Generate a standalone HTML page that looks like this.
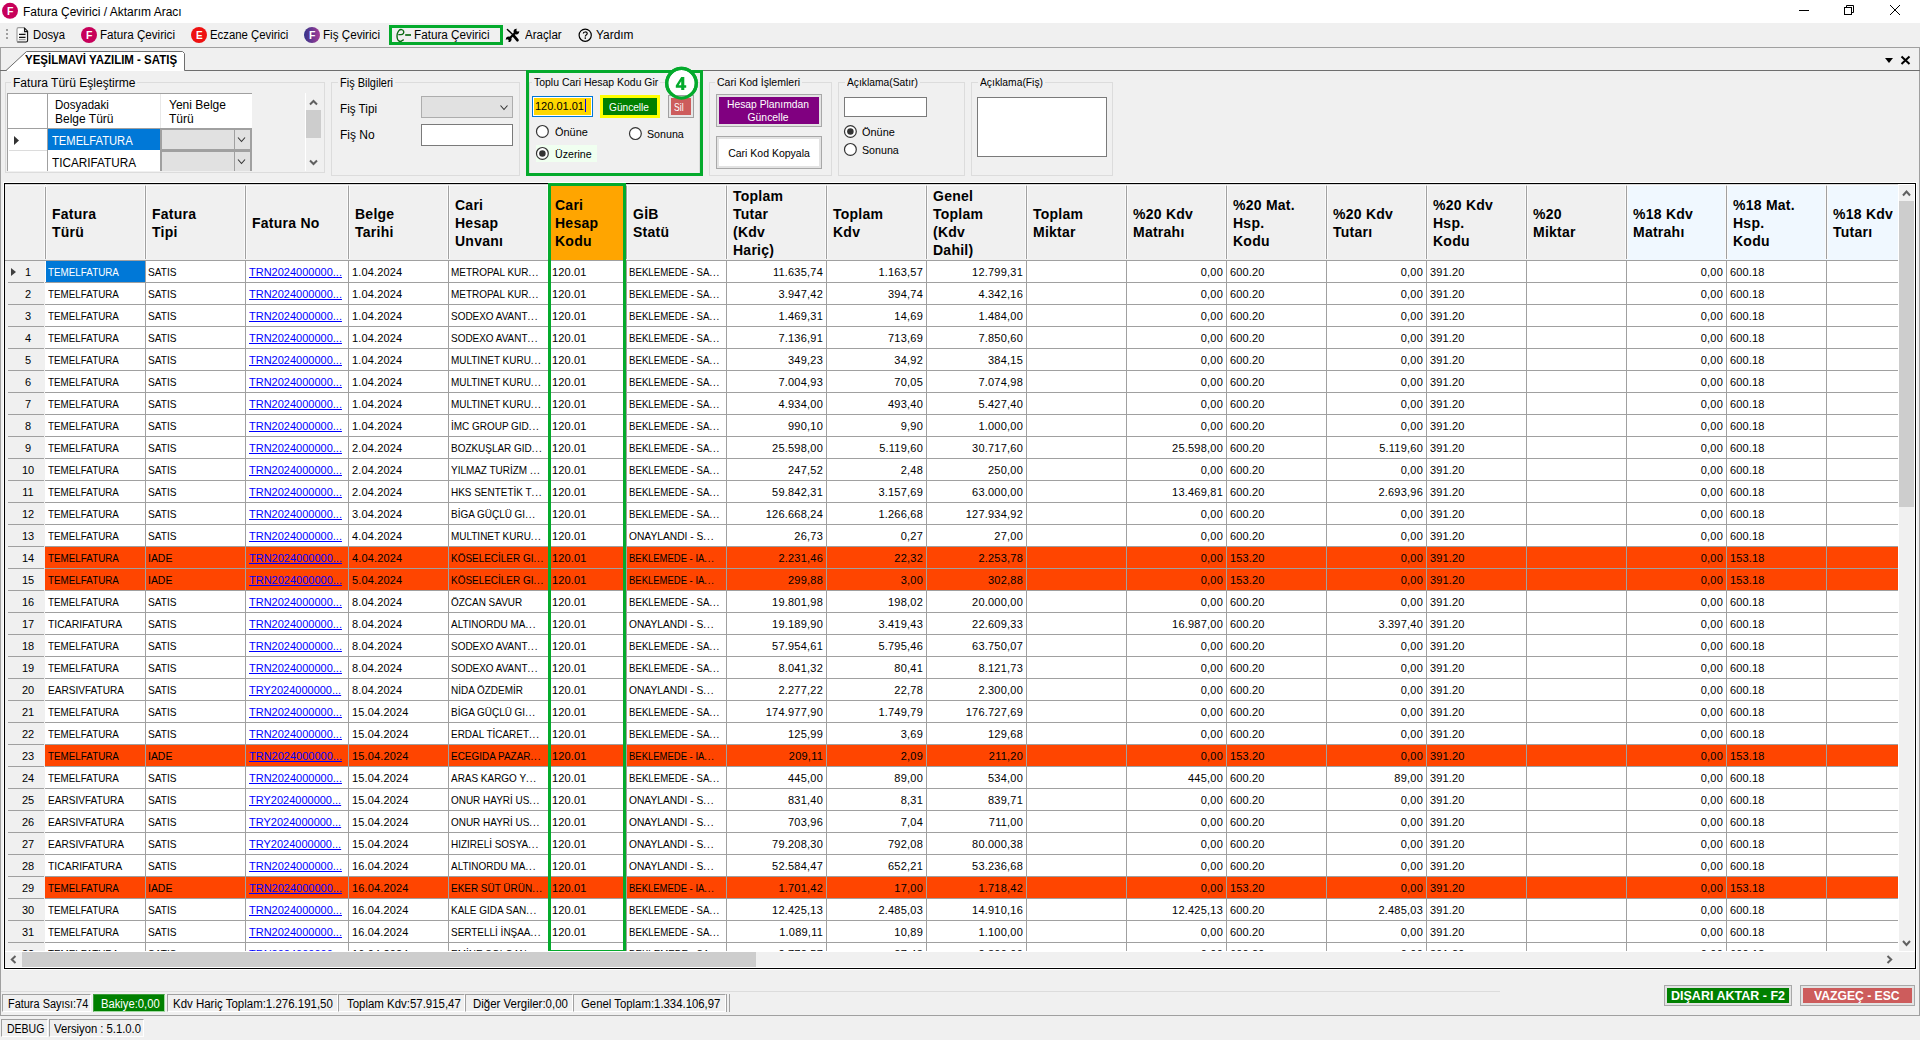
<!DOCTYPE html><html><head><meta charset="utf-8"><title>Fatura Çevirici / Aktarım Aracı</title><style>

*{margin:0;padding:0;box-sizing:border-box}
html,body{width:1920px;height:1040px;overflow:hidden;background:#f0f0f0;font-family:"Liberation Sans", sans-serif;color:#000}
div{position:absolute}
.t{white-space:pre;line-height:14px}
.g{white-space:pre;font-size:11px;line-height:14px;top:0}
.gr{text-align:right;letter-spacing:0.22px}
.n{letter-spacing:0.15px}
.u{transform:scaleX(0.905);transform-origin:left top}
.uf{transform:scaleX(0.887);transform-origin:left top}
.hd{white-space:pre;font-size:14px;font-weight:bold;line-height:18px;letter-spacing:0.25px}
.lnk{color:#0000ff;text-decoration:underline}
svg{position:absolute;overflow:visible}

</style></head><body>
<div style="left:0px;top:0px;width:1920px;height:23px;background:#fff"></div>
<svg style="left:0;top:0" width="40" height="23"><circle cx="10" cy="10.8" r="8" fill="#c7005a"/><text x="10.3" y="14.8" font-family="Liberation Sans" font-weight="bold" font-size="10.5" fill="#fff" text-anchor="middle">F</text></svg>
<div class="t" style="left:23px;top:5px;font-size:12px;">Fatura Çevirici / Aktarım Aracı</div>
<svg style="left:1790px;top:0" width="130" height="23"><rect x="9" y="10" width="10" height="1" fill="#000"/><rect x="54.5" y="7.5" width="7" height="7" fill="none" stroke="#000" stroke-width="1"/><path d="M56.5 7.5 V5.5 H63.5 V12.5 H61.5" fill="none" stroke="#000" stroke-width="1"/><path d="M100 5 L110 15 M110 5 L100 15" stroke="#000" stroke-width="1"/></svg>
<svg style="left:0;top:23px" width="700" height="24"><rect x="6" y="6" width="2" height="2" fill="#a0a0a0"/><rect x="6" y="10" width="2" height="2" fill="#a0a0a0"/><rect x="6" y="14" width="2" height="2" fill="#a0a0a0"/><path d="M24 4.6 H18.6 Q17 4.6 17 6.2 V18.5" fill="#fff" stroke="#999" stroke-width="1.1"/><path d="M17.2 19 H26 Q27.6 19 27.6 17.4 V8.2 L24 4.6" fill="none" stroke="#111" stroke-width="1.1"/><path d="M24.6 5 V8.6 H27.4" fill="none" stroke="#111" stroke-width="1.1"/><path d="M19 11.4 H25.5 M19 14.4 H25.5" stroke="#111" stroke-width="1.1"/><path d="M19 16.6 H25.5" stroke="#999" stroke-width="1.1"/><circle cx="89" cy="12" r="8" fill="#c7005a"/><text x="89.3" y="16" font-family="Liberation Sans" font-weight="bold" font-size="10.5" fill="#fff" text-anchor="middle">F</text><circle cx="199" cy="12" r="8" fill="#ee1111"/><text x="199.3" y="16" font-family="Liberation Sans" font-weight="bold" font-size="10" fill="#fff" text-anchor="middle">E</text><defs><linearGradient id="pg" x1="0" x2="1"><stop offset="0" stop-color="#33338a"/><stop offset="1" stop-color="#a53c96"/></linearGradient></defs><circle cx="312" cy="12" r="8" fill="url(#pg)"/><text x="312.3" y="16" font-family="Liberation Sans" font-weight="bold" font-size="10.5" fill="#fff" text-anchor="middle">F</text><rect x="390.5" y="3.5" width="111" height="17" fill="none" stroke="#04aa2c" stroke-width="3"/><path d="M398.3 11.6 H401 C403 11.6 404.2 10 403.6 8.2 C403 6.3 400.3 6 398.9 7.6 C397.3 9.4 396.8 12.6 397.2 15 C397.6 17.8 399.6 19 401.6 18 L403.7 16.6" fill="none" stroke="#0c6a14" stroke-width="1.4"/><path d="M405.2 12 H411" stroke="#0c6a14" stroke-width="1.7"/><path d="M510 15 L515.5 9.5" stroke="#000" stroke-width="2.3"/><circle cx="516.4" cy="8.6" r="2.8" fill="#000"/><circle cx="517.9" cy="7.1" r="1.5" fill="#f0f0f0"/><path d="M517.2 6.4 L519.5 4.1 L520.6 5.2 L518.6 8.2 Z" fill="#f0f0f0"/><circle cx="508.7" cy="16.3" r="2.8" fill="#000"/><circle cx="507.2" cy="17.8" r="1.5" fill="#f0f0f0"/><path d="M507.9 18.5 L505.6 20.8 L504.5 19.7 L506.5 16.7 Z" fill="#f0f0f0"/><path d="M507.4 6.4 L512.6 11.6" stroke="#000" stroke-width="1.4" stroke-linecap="round"/><path d="M513.4 12.4 L517.4 17.2" stroke="#000" stroke-width="2.8" stroke-linecap="round"/><circle cx="585.2" cy="12.2" r="6.1" fill="none" stroke="#000" stroke-width="1.2"/><path d="M583.3 10.4 C583.3 8.6 587.2 8.4 587.2 10.4 C587.2 11.8 585.3 12 585.3 13.6" fill="none" stroke="#000" stroke-width="1.2"/><rect x="584.6" y="14.4" width="1.4" height="1.4" fill="#000"/></svg>
<div class="t" style="left:33px;top:28px;font-size:12px;transform:scaleX(0.941);transform-origin:left top;">Dosya</div>
<div class="t" style="left:100px;top:28px;font-size:12px;transform:scaleX(0.970);transform-origin:left top;">Fatura Çevirici</div>
<div class="t" style="left:210px;top:28px;font-size:12px;transform:scaleX(0.947);transform-origin:left top;">Eczane Çevirici</div>
<div class="t" style="left:323px;top:28px;font-size:12px;transform:scaleX(0.972);transform-origin:left top;">Fiş Çevirici</div>
<div class="t" style="left:414px;top:28px;font-size:12px;transform:scaleX(0.976);transform-origin:left top;">Fatura Çevirici</div>
<div class="t" style="left:525px;top:28px;font-size:12px;transform:scaleX(0.965);transform-origin:left top;">Araçlar</div>
<div class="t" style="left:596px;top:28px;font-size:12px;transform:scaleX(0.992);transform-origin:left top;">Yardım</div>
<div style="left:0px;top:47px;width:1920px;height:1px;background:#a0a0a0"></div>
<div style="left:0px;top:47px;width:1px;height:969px;background:#a0a0a0"></div>
<div style="left:1919px;top:47px;width:1px;height:969px;background:#a0a0a0"></div>
<div style="left:0px;top:70px;width:1920px;height:1px;background:#6e6e6e"></div>
<svg style="left:0;top:47px" width="200" height="25"><path d="M6 24 L27 4.5 H182.5 L184.5 6.5 V24 Z" fill="#fff"/><path d="M1 23.5 H6 L26.5 4.5 H182.5 L184.5 6.5 V23.5" fill="none" stroke="#6e6e6e" stroke-width="1"/></svg>
<div style="left:7px;top:70px;width:177px;height:1px;background:#fff"></div>
<div class="t" style="left:25px;top:53px;font-size:12px;font-weight:bold;transform:scaleX(0.957);transform-origin:left top;">YEŞİLMAVİ YAZILIM - SATIŞ</div>
<svg style="left:1880px;top:50px" width="40" height="20"><path d="M5 8 H13 L9 13 Z" fill="#000"/><path d="M21.5 6.5 L29.5 14 M29.5 6.5 L21.5 14" stroke="#000" stroke-width="2"/></svg>
<div style="left:5px;top:82px;width:320px;height:91px;border:1px solid #dcdcdc"></div>
<div style="left:11px;top:81px;width:126px;height:3px;background:#f0f0f0"></div>
<div class="t" style="left:13px;top:76px;font-size:12px;transform:scaleX(1.006);transform-origin:left top;">Fatura Türü Eşleştirme</div>
<div style="left:331px;top:82px;width:189px;height:94px;border:1px solid #dcdcdc"></div>
<div style="left:338px;top:81px;width:57px;height:3px;background:#f0f0f0"></div>
<div class="t" style="left:340px;top:76px;font-size:12px;transform:scaleX(0.914);transform-origin:left top;">Fiş Bilgileri</div>
<div style="left:529px;top:82px;width:171px;height:92px;border:1px solid #dcdcdc"></div>
<div style="left:532px;top:81px;width:128px;height:3px;background:#f0f0f0"></div>
<div class="t" style="left:534px;top:75px;font-size:11px;transform:scaleX(0.950);transform-origin:left top;">Toplu Cari Hesap Kodu Gir</div>
<div style="left:709px;top:82px;width:123px;height:94px;border:1px solid #dcdcdc"></div>
<div style="left:715px;top:81px;width:87px;height:3px;background:#f0f0f0"></div>
<div class="t" style="left:717px;top:75px;font-size:11px;transform:scaleX(0.956);transform-origin:left top;">Cari Kod İşlemleri</div>
<div style="left:838px;top:82px;width:127px;height:94px;border:1px solid #dcdcdc"></div>
<div style="left:845px;top:81px;width:75px;height:3px;background:#f0f0f0"></div>
<div class="t" style="left:847px;top:75px;font-size:11px;transform:scaleX(0.935);transform-origin:left top;">Açıklama(Satır)</div>
<div style="left:971px;top:82px;width:142px;height:94px;border:1px solid #dcdcdc"></div>
<div style="left:978px;top:81px;width:67px;height:3px;background:#f0f0f0"></div>
<div class="t" style="left:980px;top:75px;font-size:11px;transform:scaleX(0.937);transform-origin:left top;">Açıklama(Fiş)</div>
<div style="left:7px;top:93px;width:245px;height:78px;background:#fff;border-top:1px solid #a0a0a0;border-left:1px solid #a0a0a0"></div>
<div style="left:47px;top:94px;width:1px;height:77px;background:#a0a0a0"></div>
<div style="left:160px;top:94px;width:1px;height:34px;background:#e8e8e8"></div>
<div style="left:8px;top:128px;width:244px;height:1px;background:#a0a0a0"></div>
<div style="left:9px;top:150px;width:38px;height:1px;background:#dcdcdc"></div>
<div class="t" style="left:55px;top:98px;font-size:12px;transform:scaleX(0.960);transform-origin:left top;">Dosyadaki</div>
<div class="t" style="left:55px;top:112px;font-size:12px;">Belge Türü</div>
<div class="t" style="left:169px;top:98px;font-size:12px;">Yeni Belge</div>
<div class="t" style="left:169px;top:112px;font-size:12px;">Türü</div>
<div style="left:48px;top:129px;width:112px;height:21px;background:#0078d7"></div>
<div class="t" style="left:52px;top:134px;font-size:12px;transform:scaleX(0.933);transform-origin:left top;color:#fff">TEMELFATURA</div>
<div class="t" style="left:52px;top:156px;font-size:12px;transform:scaleX(0.979);transform-origin:left top;">TICARIFATURA</div>
<svg style="left:14px;top:136px" width="8" height="10"><path d="M0 0 L5 4.5 L0 9 Z" fill="#333"/></svg>
<div style="left:160px;top:128px;width:92px;height:23px;background:#e1e1e1;border:2px solid #a0a0a0"></div>
<div style="left:234px;top:130px;width:1px;height:19px;background:#a0a0a0"></div>
<svg style="left:237px;top:137px" width="10" height="8"><path d="M1 0.5 L4.5 4.5 L8 0.5" fill="none" stroke="#333" stroke-width="1.1"/></svg>
<div style="left:160px;top:150px;width:92px;height:23px;background:#e1e1e1;border:2px solid #a0a0a0"></div>
<div style="left:234px;top:152px;width:1px;height:19px;background:#a0a0a0"></div>
<svg style="left:237px;top:159px" width="10" height="8"><path d="M1 0.5 L4.5 4.5 L8 0.5" fill="none" stroke="#333" stroke-width="1.1"/></svg>
<div style="left:5px;top:171px;width:320px;height:2px;background:#f0f0f0"></div>
<div style="left:305px;top:93px;width:17px;height:78px;background:#f0f0f0;border-left:1px solid #fff"></div>
<div style="left:306px;top:110px;width:15px;height:28px;background:#cdcdcd"></div>
<svg style="left:305px;top:93px" width="17" height="78"><path d="M5 11.5 L8.5 8 L12 11.5" fill="none" stroke="#606060" stroke-width="2"/><path d="M5 67.5 L8.5 71 L12 67.5" fill="none" stroke="#606060" stroke-width="2"/></svg>
<div style="left:5px;top:82px;width:320px;height:91px;border:1px solid #dcdcdc;border-top:none"></div>
<div class="t" style="left:340px;top:102px;font-size:12px;transform:scaleX(0.973);transform-origin:left top;">Fiş Tipi</div>
<div class="t" style="left:340px;top:128px;font-size:12px;">Fiş No</div>
<div style="left:421px;top:96px;width:92px;height:22px;background:#e1e1e1;border:1px solid #adadad"></div>
<svg style="left:500px;top:105px" width="12" height="8"><path d="M0.5 0.5 L4 4.5 L7.5 0.5" fill="none" stroke="#333" stroke-width="1.1"/></svg>
<div style="left:421px;top:124px;width:92px;height:22px;background:#fff;border:1px solid #7a7a7a"></div>
<div style="left:526px;top:70px;width:177px;height:106px;border:3px solid #04aa2c"></div>
<svg style="left:660px;top:62px" width="44" height="44"><circle cx="21.5" cy="21.25" r="14.8" fill="#fff" stroke="#04aa2c" stroke-width="3.2"/><path d="M21.2 15 L24.3 15 L24.3 23.2 L26.2 23.2 L26.2 25.8 L24.3 25.8 L24.3 28 L21.2 28 L21.2 25.8 L15.8 25.8 L15.8 23.4 Z M18.7 23.2 L21.2 23.2 L21.2 19.3 Z" fill="#04aa2c" fill-rule="evenodd"/></svg>
<div style="left:532px;top:96px;width:61px;height:21px;background:#ffd700;border:1px solid #0078d7;box-shadow:inset 0 0 0 1px #fff"></div>
<div class="t" style="left:535px;top:99px;font-size:11px;">120.01.01</div>
<div style="left:585px;top:99px;width:1px;height:13px;background:#0000ff"></div>
<div style="left:600px;top:95px;width:60px;height:23px;background:#008000;border:3px solid #ffff00"></div>
<div class="t" style="left:609px;top:100px;font-size:11px;transform:scaleX(0.921);transform-origin:left top;color:#fff">Güncelle</div>
<div style="left:668px;top:95px;width:26px;height:23px;background:#cd5c5c;border:3px solid #e6e6e6"></div>
<div style="left:668px;top:95px;width:26px;height:23px;border:1px solid #a0a0a0"></div>
<div class="t" style="left:674px;top:100px;font-size:11px;transform:scaleX(0.785);transform-origin:left top;color:#fff">Sil</div>
<svg style="left:660px;top:62px" width="44" height="44"><circle cx="21.5" cy="21.25" r="14.8" fill="none" stroke="#04aa2c" stroke-width="3.2"/></svg>
<div style="left:536px;top:145px;width:61px;height:17px;background:#f0fff0"></div>
<svg style="left:534px;top:123px" width="16" height="16"><circle cx="8.399999999999977" cy="8.400000000000006" r="5.9" fill="#fff" stroke="#333" stroke-width="1.2"/></svg>
<div class="t" style="left:555px;top:125px;font-size:11px;transform:scaleX(0.993);transform-origin:left top;">Önüne</div>
<svg style="left:627px;top:125px" width="16" height="16"><circle cx="8.399999999999977" cy="8.599999999999994" r="5.9" fill="#fff" stroke="#333" stroke-width="1.2"/></svg>
<div class="t" style="left:647px;top:127px;font-size:11px;transform:scaleX(0.970);transform-origin:left top;">Sonuna</div>
<svg style="left:534px;top:145px" width="16" height="16"><circle cx="8.399999999999977" cy="8.400000000000006" r="5.9" fill="#fff" stroke="#333" stroke-width="1.2"/><circle cx="8.399999999999977" cy="8.400000000000006" r="3.25" fill="#333"/></svg>
<div class="t" style="left:555px;top:147px;font-size:11px;transform:scaleX(0.968);transform-origin:left top;">Üzerine</div>
<div style="left:716px;top:94px;width:106px;height:33px;background:#800080;border:3px solid #e3e3e3"></div>
<div style="left:716px;top:94px;width:106px;height:33px;border:1px solid #a8a8a8"></div>
<div class="t" style="left:715px;width:106px;text-align:center;top:98px;font-size:10.2px;transform:scaleX(1.013);transform-origin:center top;color:#fff">Hesap Planımdan</div>
<div class="t" style="left:715px;width:106px;text-align:center;top:111px;font-size:10.2px;transform:scaleX(1.019);transform-origin:center top;color:#fff">Güncelle</div>
<div style="left:716px;top:136px;width:106px;height:33px;background:#fff;border:3px solid #e3e3e3"></div>
<div style="left:716px;top:136px;width:106px;height:33px;border:1px solid #a8a8a8"></div>
<div class="t" style="left:716px;width:106px;text-align:center;top:146px;font-size:11px;transform:scaleX(0.954);transform-origin:center top;">Cari Kod Kopyala</div>
<div style="left:844px;top:97px;width:83px;height:20px;background:#fff;border:1px solid #7a7a7a"></div>
<svg style="left:842px;top:123px" width="16" height="16"><circle cx="8.399999999999977" cy="8.5" r="5.9" fill="#fff" stroke="#333" stroke-width="1.2"/><circle cx="8.399999999999977" cy="8.5" r="3.25" fill="#333"/></svg>
<div class="t" style="left:862px;top:125px;font-size:11px;transform:scaleX(0.993);transform-origin:left top;">Önüne</div>
<svg style="left:842px;top:141px" width="16" height="16"><circle cx="8.399999999999977" cy="8.400000000000006" r="5.9" fill="#fff" stroke="#333" stroke-width="1.2"/></svg>
<div class="t" style="left:862px;top:143px;font-size:11px;transform:scaleX(0.970);transform-origin:left top;">Sonuna</div>
<div style="left:977px;top:97px;width:130px;height:60px;background:#fff;border:1px solid #7a7a7a"></div>
<div style="left:3px;top:182px;width:1914px;height:788px;border:1px solid #fff"></div>
<div style="left:4px;top:183px;width:1912px;height:786px;background:#f0f0f0;border:1px solid #000"></div>
<div style="left:5px;top:184px;width:1893px;height:76px;background:#f0f0f0;overflow:hidden">
<div style="left:40px;top:0;width:100px;height:76px;background:#f0f0f0"></div>
<div class="hd" style="left:47px;top:21px">Fatura
Türü</div>
<div style="left:40px;top:1px;width:1px;height:74px;background:#a0a0a0;box-shadow:-1px 0 0 #fafafa,1px 0 0 #fafafa"></div>
<div style="left:140px;top:0;width:100px;height:76px;background:#f0f0f0"></div>
<div class="hd" style="left:147px;top:21px">Fatura
Tipi</div>
<div style="left:140px;top:1px;width:1px;height:74px;background:#a0a0a0;box-shadow:-1px 0 0 #fafafa,1px 0 0 #fafafa"></div>
<div style="left:240px;top:0;width:103px;height:76px;background:#f0f0f0"></div>
<div class="hd" style="left:247px;top:30px">Fatura No</div>
<div style="left:240px;top:1px;width:1px;height:74px;background:#a0a0a0;box-shadow:-1px 0 0 #fafafa,1px 0 0 #fafafa"></div>
<div style="left:343px;top:0;width:100px;height:76px;background:#f0f0f0"></div>
<div class="hd" style="left:350px;top:21px">Belge
Tarihi</div>
<div style="left:343px;top:1px;width:1px;height:74px;background:#a0a0a0;box-shadow:-1px 0 0 #fafafa,1px 0 0 #fafafa"></div>
<div style="left:443px;top:0;width:100px;height:76px;background:#f0f0f0"></div>
<div class="hd" style="left:450px;top:12px">Cari
Hesap
Unvanı</div>
<div style="left:443px;top:1px;width:1px;height:74px;background:#a0a0a0;box-shadow:-1px 0 0 #fafafa,1px 0 0 #fafafa"></div>
<div style="left:543px;top:0;width:78px;height:76px;background:#ffa500"></div>
<div class="hd" style="left:550px;top:12px">Cari
Hesap
Kodu</div>
<div style="left:543px;top:1px;width:1px;height:74px;background:#a0a0a0;box-shadow:-1px 0 0 #fafafa,1px 0 0 #fafafa"></div>
<div style="left:621px;top:0;width:100px;height:76px;background:#f0f0f0"></div>
<div class="hd" style="left:628px;top:21px">GİB
Statü</div>
<div style="left:621px;top:1px;width:1px;height:74px;background:#a0a0a0;box-shadow:-1px 0 0 #fafafa,1px 0 0 #fafafa"></div>
<div style="left:721px;top:0;width:100px;height:76px;background:#f0f0f0"></div>
<div class="hd" style="left:728px;top:3px">Toplam
Tutar
(Kdv
Hariç)</div>
<div style="left:721px;top:1px;width:1px;height:74px;background:#a0a0a0;box-shadow:-1px 0 0 #fafafa,1px 0 0 #fafafa"></div>
<div style="left:821px;top:0;width:100px;height:76px;background:#f0f0f0"></div>
<div class="hd" style="left:828px;top:21px">Toplam
Kdv</div>
<div style="left:821px;top:1px;width:1px;height:74px;background:#a0a0a0;box-shadow:-1px 0 0 #fafafa,1px 0 0 #fafafa"></div>
<div style="left:921px;top:0;width:100px;height:76px;background:#f0f0f0"></div>
<div class="hd" style="left:928px;top:3px">Genel
Toplam
(Kdv
Dahil)</div>
<div style="left:921px;top:1px;width:1px;height:74px;background:#a0a0a0;box-shadow:-1px 0 0 #fafafa,1px 0 0 #fafafa"></div>
<div style="left:1021px;top:0;width:100px;height:76px;background:#f0f0f0"></div>
<div class="hd" style="left:1028px;top:21px">Toplam
Miktar</div>
<div style="left:1021px;top:1px;width:1px;height:74px;background:#a0a0a0;box-shadow:-1px 0 0 #fafafa,1px 0 0 #fafafa"></div>
<div style="left:1121px;top:0;width:100px;height:76px;background:#f0f0f0"></div>
<div class="hd" style="left:1128px;top:21px">%20 Kdv
Matrahı</div>
<div style="left:1121px;top:1px;width:1px;height:74px;background:#a0a0a0;box-shadow:-1px 0 0 #fafafa,1px 0 0 #fafafa"></div>
<div style="left:1221px;top:0;width:100px;height:76px;background:#f0f0f0"></div>
<div class="hd" style="left:1228px;top:12px">%20 Mat.
Hsp.
Kodu</div>
<div style="left:1221px;top:1px;width:1px;height:74px;background:#a0a0a0;box-shadow:-1px 0 0 #fafafa,1px 0 0 #fafafa"></div>
<div style="left:1321px;top:0;width:100px;height:76px;background:#f0f0f0"></div>
<div class="hd" style="left:1328px;top:21px">%20 Kdv
Tutarı</div>
<div style="left:1321px;top:1px;width:1px;height:74px;background:#a0a0a0;box-shadow:-1px 0 0 #fafafa,1px 0 0 #fafafa"></div>
<div style="left:1421px;top:0;width:100px;height:76px;background:#f0f0f0"></div>
<div class="hd" style="left:1428px;top:12px">%20 Kdv
Hsp.
Kodu</div>
<div style="left:1421px;top:1px;width:1px;height:74px;background:#a0a0a0;box-shadow:-1px 0 0 #fafafa,1px 0 0 #fafafa"></div>
<div style="left:1521px;top:0;width:100px;height:76px;background:#f0f0f0"></div>
<div class="hd" style="left:1528px;top:21px">%20
Miktar</div>
<div style="left:1521px;top:1px;width:1px;height:74px;background:#a0a0a0;box-shadow:-1px 0 0 #fafafa,1px 0 0 #fafafa"></div>
<div style="left:1621px;top:0;width:100px;height:76px;background:#f0f8ff"></div>
<div class="hd" style="left:1628px;top:21px">%18 Kdv
Matrahı</div>
<div style="left:1621px;top:1px;width:1px;height:74px;background:#a0a0a0;box-shadow:-1px 0 0 #fafafa,1px 0 0 #fafafa"></div>
<div style="left:1721px;top:0;width:100px;height:76px;background:#f0f8ff"></div>
<div class="hd" style="left:1728px;top:12px">%18 Mat.
Hsp.
Kodu</div>
<div style="left:1721px;top:1px;width:1px;height:74px;background:#a0a0a0;box-shadow:-1px 0 0 #fafafa,1px 0 0 #fafafa"></div>
<div style="left:1821px;top:0;width:72px;height:76px;background:#f0f8ff"></div>
<div class="hd" style="left:1828px;top:21px">%18 Kdv
Tutarı</div>
<div style="left:1821px;top:1px;width:1px;height:74px;background:#a0a0a0;box-shadow:-1px 0 0 #fafafa,1px 0 0 #fafafa"></div>
</div>
<div style="left:5px;top:184px;width:1893px;height:1px;background:#d8d8d8"></div>
<div style="left:5px;top:185px;width:1893px;height:1px;background:rgba(255,255,255,0.6)"></div>
<div style="left:5px;top:260px;width:1893px;height:1px;background:#a0a0a0"></div>
<div style="left:5px;top:261px;width:1893px;height:690px;overflow:hidden;background:#fff">
<div style="left:40px;top:0px;width:1853px;height:21px;background:#fff"></div>
<div style="left:0;top:0px;width:40px;height:22px;background:#f0f0f0"></div>
<div class="g" style="left:8px;width:30px;text-align:center;top:4px">1</div>
<div style="left:40px;top:21px;width:1853px;height:1px;background:#a0a0a0"></div>
<div style="left:3px;top:21px;width:36px;height:1px;background:#a0a0a0"></div>
<div style="left:41px;top:0px;width:99px;height:21px;background:#0078d7"></div>
<div class="g" style="left:43px;top:4px;transform:scaleX(0.895);transform-origin:left top;color:#fff;">TEMELFATURA</div>
<div class="g" style="left:143px;top:4px;transform:scaleX(0.92);transform-origin:left top;">SATIS</div>
<div class="g" style="left:244px;top:4px;"><span class="lnk">TRN2024000000...</span></div>
<div class="g n" style="left:347px;top:4px;">1.04.2024</div>
<div class="g u" style="left:446px;top:4px;">METROPAL KUR<span style="letter-spacing:0.9px">...</span></div>
<div class="g n" style="left:547px;top:4px;">120.01</div>
<div class="g" style="left:624px;top:4px;transform:scaleX(0.878);transform-origin:left top;">BEKLEMEDE - SA<span style="letter-spacing:0.9px">...</span></div>
<div class="g gr" style="left:721px;width:97px;top:4px;">11.635,74</div>
<div class="g gr" style="left:821px;width:97px;top:4px;">1.163,57</div>
<div class="g gr" style="left:921px;width:97px;top:4px;">12.799,31</div>
<div class="g gr" style="left:1121px;width:97px;top:4px;">0,00</div>
<div class="g n" style="left:1225px;top:4px;">600.20</div>
<div class="g gr" style="left:1321px;width:97px;top:4px;">0,00</div>
<div class="g n" style="left:1425px;top:4px;">391.20</div>
<div class="g gr" style="left:1621px;width:97px;top:4px;">0,00</div>
<div class="g n" style="left:1725px;top:4px;">600.18</div>
<div style="left:40px;top:22px;width:1853px;height:21px;background:#fff"></div>
<div style="left:0;top:22px;width:40px;height:22px;background:#f0f0f0"></div>
<div class="g" style="left:8px;width:30px;text-align:center;top:26px">2</div>
<div style="left:40px;top:43px;width:1853px;height:1px;background:#a0a0a0"></div>
<div style="left:3px;top:43px;width:36px;height:1px;background:#a0a0a0"></div>
<div class="g" style="left:43px;top:26px;transform:scaleX(0.895);transform-origin:left top;">TEMELFATURA</div>
<div class="g" style="left:143px;top:26px;transform:scaleX(0.92);transform-origin:left top;">SATIS</div>
<div class="g" style="left:244px;top:26px;"><span class="lnk">TRN2024000000...</span></div>
<div class="g n" style="left:347px;top:26px;">1.04.2024</div>
<div class="g u" style="left:446px;top:26px;">METROPAL KUR<span style="letter-spacing:0.9px">...</span></div>
<div class="g n" style="left:547px;top:26px;">120.01</div>
<div class="g" style="left:624px;top:26px;transform:scaleX(0.878);transform-origin:left top;">BEKLEMEDE - SA<span style="letter-spacing:0.9px">...</span></div>
<div class="g gr" style="left:721px;width:97px;top:26px;">3.947,42</div>
<div class="g gr" style="left:821px;width:97px;top:26px;">394,74</div>
<div class="g gr" style="left:921px;width:97px;top:26px;">4.342,16</div>
<div class="g gr" style="left:1121px;width:97px;top:26px;">0,00</div>
<div class="g n" style="left:1225px;top:26px;">600.20</div>
<div class="g gr" style="left:1321px;width:97px;top:26px;">0,00</div>
<div class="g n" style="left:1425px;top:26px;">391.20</div>
<div class="g gr" style="left:1621px;width:97px;top:26px;">0,00</div>
<div class="g n" style="left:1725px;top:26px;">600.18</div>
<div style="left:40px;top:44px;width:1853px;height:21px;background:#fff"></div>
<div style="left:0;top:44px;width:40px;height:22px;background:#f0f0f0"></div>
<div class="g" style="left:8px;width:30px;text-align:center;top:48px">3</div>
<div style="left:40px;top:65px;width:1853px;height:1px;background:#a0a0a0"></div>
<div style="left:3px;top:65px;width:36px;height:1px;background:#a0a0a0"></div>
<div class="g" style="left:43px;top:48px;transform:scaleX(0.895);transform-origin:left top;">TEMELFATURA</div>
<div class="g" style="left:143px;top:48px;transform:scaleX(0.92);transform-origin:left top;">SATIS</div>
<div class="g" style="left:244px;top:48px;"><span class="lnk">TRN2024000000...</span></div>
<div class="g n" style="left:347px;top:48px;">1.04.2024</div>
<div class="g u" style="left:446px;top:48px;">SODEXO AVANT<span style="letter-spacing:0.9px">...</span></div>
<div class="g n" style="left:547px;top:48px;">120.01</div>
<div class="g" style="left:624px;top:48px;transform:scaleX(0.878);transform-origin:left top;">BEKLEMEDE - SA<span style="letter-spacing:0.9px">...</span></div>
<div class="g gr" style="left:721px;width:97px;top:48px;">1.469,31</div>
<div class="g gr" style="left:821px;width:97px;top:48px;">14,69</div>
<div class="g gr" style="left:921px;width:97px;top:48px;">1.484,00</div>
<div class="g gr" style="left:1121px;width:97px;top:48px;">0,00</div>
<div class="g n" style="left:1225px;top:48px;">600.20</div>
<div class="g gr" style="left:1321px;width:97px;top:48px;">0,00</div>
<div class="g n" style="left:1425px;top:48px;">391.20</div>
<div class="g gr" style="left:1621px;width:97px;top:48px;">0,00</div>
<div class="g n" style="left:1725px;top:48px;">600.18</div>
<div style="left:40px;top:66px;width:1853px;height:21px;background:#fff"></div>
<div style="left:0;top:66px;width:40px;height:22px;background:#f0f0f0"></div>
<div class="g" style="left:8px;width:30px;text-align:center;top:70px">4</div>
<div style="left:40px;top:87px;width:1853px;height:1px;background:#a0a0a0"></div>
<div style="left:3px;top:87px;width:36px;height:1px;background:#a0a0a0"></div>
<div class="g" style="left:43px;top:70px;transform:scaleX(0.895);transform-origin:left top;">TEMELFATURA</div>
<div class="g" style="left:143px;top:70px;transform:scaleX(0.92);transform-origin:left top;">SATIS</div>
<div class="g" style="left:244px;top:70px;"><span class="lnk">TRN2024000000...</span></div>
<div class="g n" style="left:347px;top:70px;">1.04.2024</div>
<div class="g u" style="left:446px;top:70px;">SODEXO AVANT<span style="letter-spacing:0.9px">...</span></div>
<div class="g n" style="left:547px;top:70px;">120.01</div>
<div class="g" style="left:624px;top:70px;transform:scaleX(0.878);transform-origin:left top;">BEKLEMEDE - SA<span style="letter-spacing:0.9px">...</span></div>
<div class="g gr" style="left:721px;width:97px;top:70px;">7.136,91</div>
<div class="g gr" style="left:821px;width:97px;top:70px;">713,69</div>
<div class="g gr" style="left:921px;width:97px;top:70px;">7.850,60</div>
<div class="g gr" style="left:1121px;width:97px;top:70px;">0,00</div>
<div class="g n" style="left:1225px;top:70px;">600.20</div>
<div class="g gr" style="left:1321px;width:97px;top:70px;">0,00</div>
<div class="g n" style="left:1425px;top:70px;">391.20</div>
<div class="g gr" style="left:1621px;width:97px;top:70px;">0,00</div>
<div class="g n" style="left:1725px;top:70px;">600.18</div>
<div style="left:40px;top:88px;width:1853px;height:21px;background:#fff"></div>
<div style="left:0;top:88px;width:40px;height:22px;background:#f0f0f0"></div>
<div class="g" style="left:8px;width:30px;text-align:center;top:92px">5</div>
<div style="left:40px;top:109px;width:1853px;height:1px;background:#a0a0a0"></div>
<div style="left:3px;top:109px;width:36px;height:1px;background:#a0a0a0"></div>
<div class="g" style="left:43px;top:92px;transform:scaleX(0.895);transform-origin:left top;">TEMELFATURA</div>
<div class="g" style="left:143px;top:92px;transform:scaleX(0.92);transform-origin:left top;">SATIS</div>
<div class="g" style="left:244px;top:92px;"><span class="lnk">TRN2024000000...</span></div>
<div class="g n" style="left:347px;top:92px;">1.04.2024</div>
<div class="g u" style="left:446px;top:92px;">MULTINET KURU<span style="letter-spacing:0.9px">...</span></div>
<div class="g n" style="left:547px;top:92px;">120.01</div>
<div class="g" style="left:624px;top:92px;transform:scaleX(0.878);transform-origin:left top;">BEKLEMEDE - SA<span style="letter-spacing:0.9px">...</span></div>
<div class="g gr" style="left:721px;width:97px;top:92px;">349,23</div>
<div class="g gr" style="left:821px;width:97px;top:92px;">34,92</div>
<div class="g gr" style="left:921px;width:97px;top:92px;">384,15</div>
<div class="g gr" style="left:1121px;width:97px;top:92px;">0,00</div>
<div class="g n" style="left:1225px;top:92px;">600.20</div>
<div class="g gr" style="left:1321px;width:97px;top:92px;">0,00</div>
<div class="g n" style="left:1425px;top:92px;">391.20</div>
<div class="g gr" style="left:1621px;width:97px;top:92px;">0,00</div>
<div class="g n" style="left:1725px;top:92px;">600.18</div>
<div style="left:40px;top:110px;width:1853px;height:21px;background:#fff"></div>
<div style="left:0;top:110px;width:40px;height:22px;background:#f0f0f0"></div>
<div class="g" style="left:8px;width:30px;text-align:center;top:114px">6</div>
<div style="left:40px;top:131px;width:1853px;height:1px;background:#a0a0a0"></div>
<div style="left:3px;top:131px;width:36px;height:1px;background:#a0a0a0"></div>
<div class="g" style="left:43px;top:114px;transform:scaleX(0.895);transform-origin:left top;">TEMELFATURA</div>
<div class="g" style="left:143px;top:114px;transform:scaleX(0.92);transform-origin:left top;">SATIS</div>
<div class="g" style="left:244px;top:114px;"><span class="lnk">TRN2024000000...</span></div>
<div class="g n" style="left:347px;top:114px;">1.04.2024</div>
<div class="g u" style="left:446px;top:114px;">MULTINET KURU<span style="letter-spacing:0.9px">...</span></div>
<div class="g n" style="left:547px;top:114px;">120.01</div>
<div class="g" style="left:624px;top:114px;transform:scaleX(0.878);transform-origin:left top;">BEKLEMEDE - SA<span style="letter-spacing:0.9px">...</span></div>
<div class="g gr" style="left:721px;width:97px;top:114px;">7.004,93</div>
<div class="g gr" style="left:821px;width:97px;top:114px;">70,05</div>
<div class="g gr" style="left:921px;width:97px;top:114px;">7.074,98</div>
<div class="g gr" style="left:1121px;width:97px;top:114px;">0,00</div>
<div class="g n" style="left:1225px;top:114px;">600.20</div>
<div class="g gr" style="left:1321px;width:97px;top:114px;">0,00</div>
<div class="g n" style="left:1425px;top:114px;">391.20</div>
<div class="g gr" style="left:1621px;width:97px;top:114px;">0,00</div>
<div class="g n" style="left:1725px;top:114px;">600.18</div>
<div style="left:40px;top:132px;width:1853px;height:21px;background:#fff"></div>
<div style="left:0;top:132px;width:40px;height:22px;background:#f0f0f0"></div>
<div class="g" style="left:8px;width:30px;text-align:center;top:136px">7</div>
<div style="left:40px;top:153px;width:1853px;height:1px;background:#a0a0a0"></div>
<div style="left:3px;top:153px;width:36px;height:1px;background:#a0a0a0"></div>
<div class="g" style="left:43px;top:136px;transform:scaleX(0.895);transform-origin:left top;">TEMELFATURA</div>
<div class="g" style="left:143px;top:136px;transform:scaleX(0.92);transform-origin:left top;">SATIS</div>
<div class="g" style="left:244px;top:136px;"><span class="lnk">TRN2024000000...</span></div>
<div class="g n" style="left:347px;top:136px;">1.04.2024</div>
<div class="g u" style="left:446px;top:136px;">MULTINET KURU<span style="letter-spacing:0.9px">...</span></div>
<div class="g n" style="left:547px;top:136px;">120.01</div>
<div class="g" style="left:624px;top:136px;transform:scaleX(0.878);transform-origin:left top;">BEKLEMEDE - SA<span style="letter-spacing:0.9px">...</span></div>
<div class="g gr" style="left:721px;width:97px;top:136px;">4.934,00</div>
<div class="g gr" style="left:821px;width:97px;top:136px;">493,40</div>
<div class="g gr" style="left:921px;width:97px;top:136px;">5.427,40</div>
<div class="g gr" style="left:1121px;width:97px;top:136px;">0,00</div>
<div class="g n" style="left:1225px;top:136px;">600.20</div>
<div class="g gr" style="left:1321px;width:97px;top:136px;">0,00</div>
<div class="g n" style="left:1425px;top:136px;">391.20</div>
<div class="g gr" style="left:1621px;width:97px;top:136px;">0,00</div>
<div class="g n" style="left:1725px;top:136px;">600.18</div>
<div style="left:40px;top:154px;width:1853px;height:21px;background:#fff"></div>
<div style="left:0;top:154px;width:40px;height:22px;background:#f0f0f0"></div>
<div class="g" style="left:8px;width:30px;text-align:center;top:158px">8</div>
<div style="left:40px;top:175px;width:1853px;height:1px;background:#a0a0a0"></div>
<div style="left:3px;top:175px;width:36px;height:1px;background:#a0a0a0"></div>
<div class="g" style="left:43px;top:158px;transform:scaleX(0.895);transform-origin:left top;">TEMELFATURA</div>
<div class="g" style="left:143px;top:158px;transform:scaleX(0.92);transform-origin:left top;">SATIS</div>
<div class="g" style="left:244px;top:158px;"><span class="lnk">TRN2024000000...</span></div>
<div class="g n" style="left:347px;top:158px;">1.04.2024</div>
<div class="g u" style="left:446px;top:158px;">İMC GROUP GID<span style="letter-spacing:0.9px">...</span></div>
<div class="g n" style="left:547px;top:158px;">120.01</div>
<div class="g" style="left:624px;top:158px;transform:scaleX(0.878);transform-origin:left top;">BEKLEMEDE - SA<span style="letter-spacing:0.9px">...</span></div>
<div class="g gr" style="left:721px;width:97px;top:158px;">990,10</div>
<div class="g gr" style="left:821px;width:97px;top:158px;">9,90</div>
<div class="g gr" style="left:921px;width:97px;top:158px;">1.000,00</div>
<div class="g gr" style="left:1121px;width:97px;top:158px;">0,00</div>
<div class="g n" style="left:1225px;top:158px;">600.20</div>
<div class="g gr" style="left:1321px;width:97px;top:158px;">0,00</div>
<div class="g n" style="left:1425px;top:158px;">391.20</div>
<div class="g gr" style="left:1621px;width:97px;top:158px;">0,00</div>
<div class="g n" style="left:1725px;top:158px;">600.18</div>
<div style="left:40px;top:176px;width:1853px;height:21px;background:#fff"></div>
<div style="left:0;top:176px;width:40px;height:22px;background:#f0f0f0"></div>
<div class="g" style="left:8px;width:30px;text-align:center;top:180px">9</div>
<div style="left:40px;top:197px;width:1853px;height:1px;background:#a0a0a0"></div>
<div style="left:3px;top:197px;width:36px;height:1px;background:#a0a0a0"></div>
<div class="g" style="left:43px;top:180px;transform:scaleX(0.895);transform-origin:left top;">TEMELFATURA</div>
<div class="g" style="left:143px;top:180px;transform:scaleX(0.92);transform-origin:left top;">SATIS</div>
<div class="g" style="left:244px;top:180px;"><span class="lnk">TRN2024000000...</span></div>
<div class="g n" style="left:347px;top:180px;">2.04.2024</div>
<div class="g u" style="left:446px;top:180px;">BOZKUŞLAR GID<span style="letter-spacing:0.9px">...</span></div>
<div class="g n" style="left:547px;top:180px;">120.01</div>
<div class="g" style="left:624px;top:180px;transform:scaleX(0.878);transform-origin:left top;">BEKLEMEDE - SA<span style="letter-spacing:0.9px">...</span></div>
<div class="g gr" style="left:721px;width:97px;top:180px;">25.598,00</div>
<div class="g gr" style="left:821px;width:97px;top:180px;">5.119,60</div>
<div class="g gr" style="left:921px;width:97px;top:180px;">30.717,60</div>
<div class="g gr" style="left:1121px;width:97px;top:180px;">25.598,00</div>
<div class="g n" style="left:1225px;top:180px;">600.20</div>
<div class="g gr" style="left:1321px;width:97px;top:180px;">5.119,60</div>
<div class="g n" style="left:1425px;top:180px;">391.20</div>
<div class="g gr" style="left:1621px;width:97px;top:180px;">0,00</div>
<div class="g n" style="left:1725px;top:180px;">600.18</div>
<div style="left:40px;top:198px;width:1853px;height:21px;background:#fff"></div>
<div style="left:0;top:198px;width:40px;height:22px;background:#f0f0f0"></div>
<div class="g" style="left:8px;width:30px;text-align:center;top:202px">10</div>
<div style="left:40px;top:219px;width:1853px;height:1px;background:#a0a0a0"></div>
<div style="left:3px;top:219px;width:36px;height:1px;background:#a0a0a0"></div>
<div class="g" style="left:43px;top:202px;transform:scaleX(0.895);transform-origin:left top;">TEMELFATURA</div>
<div class="g" style="left:143px;top:202px;transform:scaleX(0.92);transform-origin:left top;">SATIS</div>
<div class="g" style="left:244px;top:202px;"><span class="lnk">TRN2024000000...</span></div>
<div class="g n" style="left:347px;top:202px;">2.04.2024</div>
<div class="g u" style="left:446px;top:202px;">YILMAZ TURİZM <span style="letter-spacing:0.9px">...</span></div>
<div class="g n" style="left:547px;top:202px;">120.01</div>
<div class="g" style="left:624px;top:202px;transform:scaleX(0.878);transform-origin:left top;">BEKLEMEDE - SA<span style="letter-spacing:0.9px">...</span></div>
<div class="g gr" style="left:721px;width:97px;top:202px;">247,52</div>
<div class="g gr" style="left:821px;width:97px;top:202px;">2,48</div>
<div class="g gr" style="left:921px;width:97px;top:202px;">250,00</div>
<div class="g gr" style="left:1121px;width:97px;top:202px;">0,00</div>
<div class="g n" style="left:1225px;top:202px;">600.20</div>
<div class="g gr" style="left:1321px;width:97px;top:202px;">0,00</div>
<div class="g n" style="left:1425px;top:202px;">391.20</div>
<div class="g gr" style="left:1621px;width:97px;top:202px;">0,00</div>
<div class="g n" style="left:1725px;top:202px;">600.18</div>
<div style="left:40px;top:220px;width:1853px;height:21px;background:#fff"></div>
<div style="left:0;top:220px;width:40px;height:22px;background:#f0f0f0"></div>
<div class="g" style="left:8px;width:30px;text-align:center;top:224px">11</div>
<div style="left:40px;top:241px;width:1853px;height:1px;background:#a0a0a0"></div>
<div style="left:3px;top:241px;width:36px;height:1px;background:#a0a0a0"></div>
<div class="g" style="left:43px;top:224px;transform:scaleX(0.895);transform-origin:left top;">TEMELFATURA</div>
<div class="g" style="left:143px;top:224px;transform:scaleX(0.92);transform-origin:left top;">SATIS</div>
<div class="g" style="left:244px;top:224px;"><span class="lnk">TRN2024000000...</span></div>
<div class="g n" style="left:347px;top:224px;">2.04.2024</div>
<div class="g u" style="left:446px;top:224px;">HKS SENTETİK T<span style="letter-spacing:0.9px">...</span></div>
<div class="g n" style="left:547px;top:224px;">120.01</div>
<div class="g" style="left:624px;top:224px;transform:scaleX(0.878);transform-origin:left top;">BEKLEMEDE - SA<span style="letter-spacing:0.9px">...</span></div>
<div class="g gr" style="left:721px;width:97px;top:224px;">59.842,31</div>
<div class="g gr" style="left:821px;width:97px;top:224px;">3.157,69</div>
<div class="g gr" style="left:921px;width:97px;top:224px;">63.000,00</div>
<div class="g gr" style="left:1121px;width:97px;top:224px;">13.469,81</div>
<div class="g n" style="left:1225px;top:224px;">600.20</div>
<div class="g gr" style="left:1321px;width:97px;top:224px;">2.693,96</div>
<div class="g n" style="left:1425px;top:224px;">391.20</div>
<div class="g gr" style="left:1621px;width:97px;top:224px;">0,00</div>
<div class="g n" style="left:1725px;top:224px;">600.18</div>
<div style="left:40px;top:242px;width:1853px;height:21px;background:#fff"></div>
<div style="left:0;top:242px;width:40px;height:22px;background:#f0f0f0"></div>
<div class="g" style="left:8px;width:30px;text-align:center;top:246px">12</div>
<div style="left:40px;top:263px;width:1853px;height:1px;background:#a0a0a0"></div>
<div style="left:3px;top:263px;width:36px;height:1px;background:#a0a0a0"></div>
<div class="g" style="left:43px;top:246px;transform:scaleX(0.895);transform-origin:left top;">TEMELFATURA</div>
<div class="g" style="left:143px;top:246px;transform:scaleX(0.92);transform-origin:left top;">SATIS</div>
<div class="g" style="left:244px;top:246px;"><span class="lnk">TRN2024000000...</span></div>
<div class="g n" style="left:347px;top:246px;">3.04.2024</div>
<div class="g u" style="left:446px;top:246px;">BİGA GÜÇLÜ GI<span style="letter-spacing:0.9px">...</span></div>
<div class="g n" style="left:547px;top:246px;">120.01</div>
<div class="g" style="left:624px;top:246px;transform:scaleX(0.878);transform-origin:left top;">BEKLEMEDE - SA<span style="letter-spacing:0.9px">...</span></div>
<div class="g gr" style="left:721px;width:97px;top:246px;">126.668,24</div>
<div class="g gr" style="left:821px;width:97px;top:246px;">1.266,68</div>
<div class="g gr" style="left:921px;width:97px;top:246px;">127.934,92</div>
<div class="g gr" style="left:1121px;width:97px;top:246px;">0,00</div>
<div class="g n" style="left:1225px;top:246px;">600.20</div>
<div class="g gr" style="left:1321px;width:97px;top:246px;">0,00</div>
<div class="g n" style="left:1425px;top:246px;">391.20</div>
<div class="g gr" style="left:1621px;width:97px;top:246px;">0,00</div>
<div class="g n" style="left:1725px;top:246px;">600.18</div>
<div style="left:40px;top:264px;width:1853px;height:21px;background:#fff"></div>
<div style="left:0;top:264px;width:40px;height:22px;background:#f0f0f0"></div>
<div class="g" style="left:8px;width:30px;text-align:center;top:268px">13</div>
<div style="left:40px;top:285px;width:1853px;height:1px;background:#a0a0a0"></div>
<div style="left:3px;top:285px;width:36px;height:1px;background:#a0a0a0"></div>
<div class="g" style="left:43px;top:268px;transform:scaleX(0.895);transform-origin:left top;">TEMELFATURA</div>
<div class="g" style="left:143px;top:268px;transform:scaleX(0.92);transform-origin:left top;">SATIS</div>
<div class="g" style="left:244px;top:268px;"><span class="lnk">TRN2024000000...</span></div>
<div class="g n" style="left:347px;top:268px;">4.04.2024</div>
<div class="g u" style="left:446px;top:268px;">MULTINET KURU<span style="letter-spacing:0.9px">...</span></div>
<div class="g n" style="left:547px;top:268px;">120.01</div>
<div class="g" style="left:624px;top:268px;transform:scaleX(0.93);transform-origin:left top;">ONAYLANDI - S<span style="letter-spacing:0.9px">...</span></div>
<div class="g gr" style="left:721px;width:97px;top:268px;">26,73</div>
<div class="g gr" style="left:821px;width:97px;top:268px;">0,27</div>
<div class="g gr" style="left:921px;width:97px;top:268px;">27,00</div>
<div class="g gr" style="left:1121px;width:97px;top:268px;">0,00</div>
<div class="g n" style="left:1225px;top:268px;">600.20</div>
<div class="g gr" style="left:1321px;width:97px;top:268px;">0,00</div>
<div class="g n" style="left:1425px;top:268px;">391.20</div>
<div class="g gr" style="left:1621px;width:97px;top:268px;">0,00</div>
<div class="g n" style="left:1725px;top:268px;">600.18</div>
<div style="left:40px;top:286px;width:1853px;height:21px;background:#ff4500"></div>
<div style="left:0;top:286px;width:40px;height:22px;background:#f0f0f0"></div>
<div class="g" style="left:8px;width:30px;text-align:center;top:290px">14</div>
<div style="left:40px;top:307px;width:1853px;height:1px;background:#a0a0a0"></div>
<div style="left:3px;top:307px;width:36px;height:1px;background:#a0a0a0"></div>
<div class="g" style="left:43px;top:290px;transform:scaleX(0.895);transform-origin:left top;">TEMELFATURA</div>
<div class="g" style="left:143px;top:290px;transform:scaleX(0.95);transform-origin:left top;">IADE</div>
<div class="g" style="left:244px;top:290px;"><span class="lnk">TRN2024000000...</span></div>
<div class="g n" style="left:347px;top:290px;">4.04.2024</div>
<div class="g u" style="left:446px;top:290px;">KÖSELECİLER GI<span style="letter-spacing:0.9px">...</span></div>
<div class="g n" style="left:547px;top:290px;">120.01</div>
<div class="g" style="left:624px;top:290px;transform:scaleX(0.862);transform-origin:left top;">BEKLEMEDE - IA<span style="letter-spacing:0.9px">...</span></div>
<div class="g gr" style="left:721px;width:97px;top:290px;">2.231,46</div>
<div class="g gr" style="left:821px;width:97px;top:290px;">22,32</div>
<div class="g gr" style="left:921px;width:97px;top:290px;">2.253,78</div>
<div class="g gr" style="left:1121px;width:97px;top:290px;">0,00</div>
<div class="g n" style="left:1225px;top:290px;">153.20</div>
<div class="g gr" style="left:1321px;width:97px;top:290px;">0,00</div>
<div class="g n" style="left:1425px;top:290px;">391.20</div>
<div class="g gr" style="left:1621px;width:97px;top:290px;">0,00</div>
<div class="g n" style="left:1725px;top:290px;">153.18</div>
<div style="left:40px;top:308px;width:1853px;height:21px;background:#ff4500"></div>
<div style="left:0;top:308px;width:40px;height:22px;background:#f0f0f0"></div>
<div class="g" style="left:8px;width:30px;text-align:center;top:312px">15</div>
<div style="left:40px;top:329px;width:1853px;height:1px;background:#a0a0a0"></div>
<div style="left:3px;top:329px;width:36px;height:1px;background:#a0a0a0"></div>
<div class="g" style="left:43px;top:312px;transform:scaleX(0.895);transform-origin:left top;">TEMELFATURA</div>
<div class="g" style="left:143px;top:312px;transform:scaleX(0.95);transform-origin:left top;">IADE</div>
<div class="g" style="left:244px;top:312px;"><span class="lnk">TRN2024000000...</span></div>
<div class="g n" style="left:347px;top:312px;">5.04.2024</div>
<div class="g u" style="left:446px;top:312px;">KÖSELECİLER GI<span style="letter-spacing:0.9px">...</span></div>
<div class="g n" style="left:547px;top:312px;">120.01</div>
<div class="g" style="left:624px;top:312px;transform:scaleX(0.862);transform-origin:left top;">BEKLEMEDE - IA<span style="letter-spacing:0.9px">...</span></div>
<div class="g gr" style="left:721px;width:97px;top:312px;">299,88</div>
<div class="g gr" style="left:821px;width:97px;top:312px;">3,00</div>
<div class="g gr" style="left:921px;width:97px;top:312px;">302,88</div>
<div class="g gr" style="left:1121px;width:97px;top:312px;">0,00</div>
<div class="g n" style="left:1225px;top:312px;">153.20</div>
<div class="g gr" style="left:1321px;width:97px;top:312px;">0,00</div>
<div class="g n" style="left:1425px;top:312px;">391.20</div>
<div class="g gr" style="left:1621px;width:97px;top:312px;">0,00</div>
<div class="g n" style="left:1725px;top:312px;">153.18</div>
<div style="left:40px;top:330px;width:1853px;height:21px;background:#fff"></div>
<div style="left:0;top:330px;width:40px;height:22px;background:#f0f0f0"></div>
<div class="g" style="left:8px;width:30px;text-align:center;top:334px">16</div>
<div style="left:40px;top:351px;width:1853px;height:1px;background:#a0a0a0"></div>
<div style="left:3px;top:351px;width:36px;height:1px;background:#a0a0a0"></div>
<div class="g" style="left:43px;top:334px;transform:scaleX(0.895);transform-origin:left top;">TEMELFATURA</div>
<div class="g" style="left:143px;top:334px;transform:scaleX(0.92);transform-origin:left top;">SATIS</div>
<div class="g" style="left:244px;top:334px;"><span class="lnk">TRN2024000000...</span></div>
<div class="g n" style="left:347px;top:334px;">8.04.2024</div>
<div class="g u" style="left:446px;top:334px;">ÖZCAN SAVUR</div>
<div class="g n" style="left:547px;top:334px;">120.01</div>
<div class="g" style="left:624px;top:334px;transform:scaleX(0.878);transform-origin:left top;">BEKLEMEDE - SA<span style="letter-spacing:0.9px">...</span></div>
<div class="g gr" style="left:721px;width:97px;top:334px;">19.801,98</div>
<div class="g gr" style="left:821px;width:97px;top:334px;">198,02</div>
<div class="g gr" style="left:921px;width:97px;top:334px;">20.000,00</div>
<div class="g gr" style="left:1121px;width:97px;top:334px;">0,00</div>
<div class="g n" style="left:1225px;top:334px;">600.20</div>
<div class="g gr" style="left:1321px;width:97px;top:334px;">0,00</div>
<div class="g n" style="left:1425px;top:334px;">391.20</div>
<div class="g gr" style="left:1621px;width:97px;top:334px;">0,00</div>
<div class="g n" style="left:1725px;top:334px;">600.18</div>
<div style="left:40px;top:352px;width:1853px;height:21px;background:#fff"></div>
<div style="left:0;top:352px;width:40px;height:22px;background:#f0f0f0"></div>
<div class="g" style="left:8px;width:30px;text-align:center;top:356px">17</div>
<div style="left:40px;top:373px;width:1853px;height:1px;background:#a0a0a0"></div>
<div style="left:3px;top:373px;width:36px;height:1px;background:#a0a0a0"></div>
<div class="g" style="left:43px;top:356px;transform:scaleX(0.945);transform-origin:left top;">TICARIFATURA</div>
<div class="g" style="left:143px;top:356px;transform:scaleX(0.92);transform-origin:left top;">SATIS</div>
<div class="g" style="left:244px;top:356px;"><span class="lnk">TRN2024000000...</span></div>
<div class="g n" style="left:347px;top:356px;">8.04.2024</div>
<div class="g u" style="left:446px;top:356px;">ALTINORDU MA<span style="letter-spacing:0.9px">...</span></div>
<div class="g n" style="left:547px;top:356px;">120.01</div>
<div class="g" style="left:624px;top:356px;transform:scaleX(0.93);transform-origin:left top;">ONAYLANDI - S<span style="letter-spacing:0.9px">...</span></div>
<div class="g gr" style="left:721px;width:97px;top:356px;">19.189,90</div>
<div class="g gr" style="left:821px;width:97px;top:356px;">3.419,43</div>
<div class="g gr" style="left:921px;width:97px;top:356px;">22.609,33</div>
<div class="g gr" style="left:1121px;width:97px;top:356px;">16.987,00</div>
<div class="g n" style="left:1225px;top:356px;">600.20</div>
<div class="g gr" style="left:1321px;width:97px;top:356px;">3.397,40</div>
<div class="g n" style="left:1425px;top:356px;">391.20</div>
<div class="g gr" style="left:1621px;width:97px;top:356px;">0,00</div>
<div class="g n" style="left:1725px;top:356px;">600.18</div>
<div style="left:40px;top:374px;width:1853px;height:21px;background:#fff"></div>
<div style="left:0;top:374px;width:40px;height:22px;background:#f0f0f0"></div>
<div class="g" style="left:8px;width:30px;text-align:center;top:378px">18</div>
<div style="left:40px;top:395px;width:1853px;height:1px;background:#a0a0a0"></div>
<div style="left:3px;top:395px;width:36px;height:1px;background:#a0a0a0"></div>
<div class="g" style="left:43px;top:378px;transform:scaleX(0.895);transform-origin:left top;">TEMELFATURA</div>
<div class="g" style="left:143px;top:378px;transform:scaleX(0.92);transform-origin:left top;">SATIS</div>
<div class="g" style="left:244px;top:378px;"><span class="lnk">TRN2024000000...</span></div>
<div class="g n" style="left:347px;top:378px;">8.04.2024</div>
<div class="g u" style="left:446px;top:378px;">SODEXO AVANT<span style="letter-spacing:0.9px">...</span></div>
<div class="g n" style="left:547px;top:378px;">120.01</div>
<div class="g" style="left:624px;top:378px;transform:scaleX(0.878);transform-origin:left top;">BEKLEMEDE - SA<span style="letter-spacing:0.9px">...</span></div>
<div class="g gr" style="left:721px;width:97px;top:378px;">57.954,61</div>
<div class="g gr" style="left:821px;width:97px;top:378px;">5.795,46</div>
<div class="g gr" style="left:921px;width:97px;top:378px;">63.750,07</div>
<div class="g gr" style="left:1121px;width:97px;top:378px;">0,00</div>
<div class="g n" style="left:1225px;top:378px;">600.20</div>
<div class="g gr" style="left:1321px;width:97px;top:378px;">0,00</div>
<div class="g n" style="left:1425px;top:378px;">391.20</div>
<div class="g gr" style="left:1621px;width:97px;top:378px;">0,00</div>
<div class="g n" style="left:1725px;top:378px;">600.18</div>
<div style="left:40px;top:396px;width:1853px;height:21px;background:#fff"></div>
<div style="left:0;top:396px;width:40px;height:22px;background:#f0f0f0"></div>
<div class="g" style="left:8px;width:30px;text-align:center;top:400px">19</div>
<div style="left:40px;top:417px;width:1853px;height:1px;background:#a0a0a0"></div>
<div style="left:3px;top:417px;width:36px;height:1px;background:#a0a0a0"></div>
<div class="g" style="left:43px;top:400px;transform:scaleX(0.895);transform-origin:left top;">TEMELFATURA</div>
<div class="g" style="left:143px;top:400px;transform:scaleX(0.92);transform-origin:left top;">SATIS</div>
<div class="g" style="left:244px;top:400px;"><span class="lnk">TRN2024000000...</span></div>
<div class="g n" style="left:347px;top:400px;">8.04.2024</div>
<div class="g u" style="left:446px;top:400px;">SODEXO AVANT<span style="letter-spacing:0.9px">...</span></div>
<div class="g n" style="left:547px;top:400px;">120.01</div>
<div class="g" style="left:624px;top:400px;transform:scaleX(0.878);transform-origin:left top;">BEKLEMEDE - SA<span style="letter-spacing:0.9px">...</span></div>
<div class="g gr" style="left:721px;width:97px;top:400px;">8.041,32</div>
<div class="g gr" style="left:821px;width:97px;top:400px;">80,41</div>
<div class="g gr" style="left:921px;width:97px;top:400px;">8.121,73</div>
<div class="g gr" style="left:1121px;width:97px;top:400px;">0,00</div>
<div class="g n" style="left:1225px;top:400px;">600.20</div>
<div class="g gr" style="left:1321px;width:97px;top:400px;">0,00</div>
<div class="g n" style="left:1425px;top:400px;">391.20</div>
<div class="g gr" style="left:1621px;width:97px;top:400px;">0,00</div>
<div class="g n" style="left:1725px;top:400px;">600.18</div>
<div style="left:40px;top:418px;width:1853px;height:21px;background:#fff"></div>
<div style="left:0;top:418px;width:40px;height:22px;background:#f0f0f0"></div>
<div class="g" style="left:8px;width:30px;text-align:center;top:422px">20</div>
<div style="left:40px;top:439px;width:1853px;height:1px;background:#a0a0a0"></div>
<div style="left:3px;top:439px;width:36px;height:1px;background:#a0a0a0"></div>
<div class="g" style="left:43px;top:422px;transform:scaleX(0.915);transform-origin:left top;">EARSIVFATURA</div>
<div class="g" style="left:143px;top:422px;transform:scaleX(0.92);transform-origin:left top;">SATIS</div>
<div class="g" style="left:244px;top:422px;"><span class="lnk">TRY2024000000...</span></div>
<div class="g n" style="left:347px;top:422px;">8.04.2024</div>
<div class="g u" style="left:446px;top:422px;">NİDA ÖZDEMİR</div>
<div class="g n" style="left:547px;top:422px;">120.01</div>
<div class="g" style="left:624px;top:422px;transform:scaleX(0.93);transform-origin:left top;">ONAYLANDI - S<span style="letter-spacing:0.9px">...</span></div>
<div class="g gr" style="left:721px;width:97px;top:422px;">2.277,22</div>
<div class="g gr" style="left:821px;width:97px;top:422px;">22,78</div>
<div class="g gr" style="left:921px;width:97px;top:422px;">2.300,00</div>
<div class="g gr" style="left:1121px;width:97px;top:422px;">0,00</div>
<div class="g n" style="left:1225px;top:422px;">600.20</div>
<div class="g gr" style="left:1321px;width:97px;top:422px;">0,00</div>
<div class="g n" style="left:1425px;top:422px;">391.20</div>
<div class="g gr" style="left:1621px;width:97px;top:422px;">0,00</div>
<div class="g n" style="left:1725px;top:422px;">600.18</div>
<div style="left:40px;top:440px;width:1853px;height:21px;background:#fff"></div>
<div style="left:0;top:440px;width:40px;height:22px;background:#f0f0f0"></div>
<div class="g" style="left:8px;width:30px;text-align:center;top:444px">21</div>
<div style="left:40px;top:461px;width:1853px;height:1px;background:#a0a0a0"></div>
<div style="left:3px;top:461px;width:36px;height:1px;background:#a0a0a0"></div>
<div class="g" style="left:43px;top:444px;transform:scaleX(0.895);transform-origin:left top;">TEMELFATURA</div>
<div class="g" style="left:143px;top:444px;transform:scaleX(0.92);transform-origin:left top;">SATIS</div>
<div class="g" style="left:244px;top:444px;"><span class="lnk">TRN2024000000...</span></div>
<div class="g n" style="left:347px;top:444px;">15.04.2024</div>
<div class="g u" style="left:446px;top:444px;">BİGA GÜÇLÜ GI<span style="letter-spacing:0.9px">...</span></div>
<div class="g n" style="left:547px;top:444px;">120.01</div>
<div class="g" style="left:624px;top:444px;transform:scaleX(0.878);transform-origin:left top;">BEKLEMEDE - SA<span style="letter-spacing:0.9px">...</span></div>
<div class="g gr" style="left:721px;width:97px;top:444px;">174.977,90</div>
<div class="g gr" style="left:821px;width:97px;top:444px;">1.749,79</div>
<div class="g gr" style="left:921px;width:97px;top:444px;">176.727,69</div>
<div class="g gr" style="left:1121px;width:97px;top:444px;">0,00</div>
<div class="g n" style="left:1225px;top:444px;">600.20</div>
<div class="g gr" style="left:1321px;width:97px;top:444px;">0,00</div>
<div class="g n" style="left:1425px;top:444px;">391.20</div>
<div class="g gr" style="left:1621px;width:97px;top:444px;">0,00</div>
<div class="g n" style="left:1725px;top:444px;">600.18</div>
<div style="left:40px;top:462px;width:1853px;height:21px;background:#fff"></div>
<div style="left:0;top:462px;width:40px;height:22px;background:#f0f0f0"></div>
<div class="g" style="left:8px;width:30px;text-align:center;top:466px">22</div>
<div style="left:40px;top:483px;width:1853px;height:1px;background:#a0a0a0"></div>
<div style="left:3px;top:483px;width:36px;height:1px;background:#a0a0a0"></div>
<div class="g" style="left:43px;top:466px;transform:scaleX(0.895);transform-origin:left top;">TEMELFATURA</div>
<div class="g" style="left:143px;top:466px;transform:scaleX(0.92);transform-origin:left top;">SATIS</div>
<div class="g" style="left:244px;top:466px;"><span class="lnk">TRN2024000000...</span></div>
<div class="g n" style="left:347px;top:466px;">15.04.2024</div>
<div class="g u" style="left:446px;top:466px;">ERDAL TİCARET<span style="letter-spacing:0.9px">...</span></div>
<div class="g n" style="left:547px;top:466px;">120.01</div>
<div class="g" style="left:624px;top:466px;transform:scaleX(0.878);transform-origin:left top;">BEKLEMEDE - SA<span style="letter-spacing:0.9px">...</span></div>
<div class="g gr" style="left:721px;width:97px;top:466px;">125,99</div>
<div class="g gr" style="left:821px;width:97px;top:466px;">3,69</div>
<div class="g gr" style="left:921px;width:97px;top:466px;">129,68</div>
<div class="g gr" style="left:1121px;width:97px;top:466px;">0,00</div>
<div class="g n" style="left:1225px;top:466px;">600.20</div>
<div class="g gr" style="left:1321px;width:97px;top:466px;">0,00</div>
<div class="g n" style="left:1425px;top:466px;">391.20</div>
<div class="g gr" style="left:1621px;width:97px;top:466px;">0,00</div>
<div class="g n" style="left:1725px;top:466px;">600.18</div>
<div style="left:40px;top:484px;width:1853px;height:21px;background:#ff4500"></div>
<div style="left:0;top:484px;width:40px;height:22px;background:#f0f0f0"></div>
<div class="g" style="left:8px;width:30px;text-align:center;top:488px">23</div>
<div style="left:40px;top:505px;width:1853px;height:1px;background:#a0a0a0"></div>
<div style="left:3px;top:505px;width:36px;height:1px;background:#a0a0a0"></div>
<div class="g" style="left:43px;top:488px;transform:scaleX(0.895);transform-origin:left top;">TEMELFATURA</div>
<div class="g" style="left:143px;top:488px;transform:scaleX(0.95);transform-origin:left top;">IADE</div>
<div class="g" style="left:244px;top:488px;"><span class="lnk">TRN2024000000...</span></div>
<div class="g n" style="left:347px;top:488px;">15.04.2024</div>
<div class="g u" style="left:446px;top:488px;">ECEGIDA PAZAR<span style="letter-spacing:0.9px">...</span></div>
<div class="g n" style="left:547px;top:488px;">120.01</div>
<div class="g" style="left:624px;top:488px;transform:scaleX(0.862);transform-origin:left top;">BEKLEMEDE - IA<span style="letter-spacing:0.9px">...</span></div>
<div class="g gr" style="left:721px;width:97px;top:488px;">209,11</div>
<div class="g gr" style="left:821px;width:97px;top:488px;">2,09</div>
<div class="g gr" style="left:921px;width:97px;top:488px;">211,20</div>
<div class="g gr" style="left:1121px;width:97px;top:488px;">0,00</div>
<div class="g n" style="left:1225px;top:488px;">153.20</div>
<div class="g gr" style="left:1321px;width:97px;top:488px;">0,00</div>
<div class="g n" style="left:1425px;top:488px;">391.20</div>
<div class="g gr" style="left:1621px;width:97px;top:488px;">0,00</div>
<div class="g n" style="left:1725px;top:488px;">153.18</div>
<div style="left:40px;top:506px;width:1853px;height:21px;background:#fff"></div>
<div style="left:0;top:506px;width:40px;height:22px;background:#f0f0f0"></div>
<div class="g" style="left:8px;width:30px;text-align:center;top:510px">24</div>
<div style="left:40px;top:527px;width:1853px;height:1px;background:#a0a0a0"></div>
<div style="left:3px;top:527px;width:36px;height:1px;background:#a0a0a0"></div>
<div class="g" style="left:43px;top:510px;transform:scaleX(0.895);transform-origin:left top;">TEMELFATURA</div>
<div class="g" style="left:143px;top:510px;transform:scaleX(0.92);transform-origin:left top;">SATIS</div>
<div class="g" style="left:244px;top:510px;"><span class="lnk">TRN2024000000...</span></div>
<div class="g n" style="left:347px;top:510px;">15.04.2024</div>
<div class="g u" style="left:446px;top:510px;">ARAS KARGO Y<span style="letter-spacing:0.9px">...</span></div>
<div class="g n" style="left:547px;top:510px;">120.01</div>
<div class="g" style="left:624px;top:510px;transform:scaleX(0.878);transform-origin:left top;">BEKLEMEDE - SA<span style="letter-spacing:0.9px">...</span></div>
<div class="g gr" style="left:721px;width:97px;top:510px;">445,00</div>
<div class="g gr" style="left:821px;width:97px;top:510px;">89,00</div>
<div class="g gr" style="left:921px;width:97px;top:510px;">534,00</div>
<div class="g gr" style="left:1121px;width:97px;top:510px;">445,00</div>
<div class="g n" style="left:1225px;top:510px;">600.20</div>
<div class="g gr" style="left:1321px;width:97px;top:510px;">89,00</div>
<div class="g n" style="left:1425px;top:510px;">391.20</div>
<div class="g gr" style="left:1621px;width:97px;top:510px;">0,00</div>
<div class="g n" style="left:1725px;top:510px;">600.18</div>
<div style="left:40px;top:528px;width:1853px;height:21px;background:#fff"></div>
<div style="left:0;top:528px;width:40px;height:22px;background:#f0f0f0"></div>
<div class="g" style="left:8px;width:30px;text-align:center;top:532px">25</div>
<div style="left:40px;top:549px;width:1853px;height:1px;background:#a0a0a0"></div>
<div style="left:3px;top:549px;width:36px;height:1px;background:#a0a0a0"></div>
<div class="g" style="left:43px;top:532px;transform:scaleX(0.915);transform-origin:left top;">EARSIVFATURA</div>
<div class="g" style="left:143px;top:532px;transform:scaleX(0.92);transform-origin:left top;">SATIS</div>
<div class="g" style="left:244px;top:532px;"><span class="lnk">TRY2024000000...</span></div>
<div class="g n" style="left:347px;top:532px;">15.04.2024</div>
<div class="g u" style="left:446px;top:532px;">ONUR HAYRİ US<span style="letter-spacing:0.9px">...</span></div>
<div class="g n" style="left:547px;top:532px;">120.01</div>
<div class="g" style="left:624px;top:532px;transform:scaleX(0.93);transform-origin:left top;">ONAYLANDI - S<span style="letter-spacing:0.9px">...</span></div>
<div class="g gr" style="left:721px;width:97px;top:532px;">831,40</div>
<div class="g gr" style="left:821px;width:97px;top:532px;">8,31</div>
<div class="g gr" style="left:921px;width:97px;top:532px;">839,71</div>
<div class="g gr" style="left:1121px;width:97px;top:532px;">0,00</div>
<div class="g n" style="left:1225px;top:532px;">600.20</div>
<div class="g gr" style="left:1321px;width:97px;top:532px;">0,00</div>
<div class="g n" style="left:1425px;top:532px;">391.20</div>
<div class="g gr" style="left:1621px;width:97px;top:532px;">0,00</div>
<div class="g n" style="left:1725px;top:532px;">600.18</div>
<div style="left:40px;top:550px;width:1853px;height:21px;background:#fff"></div>
<div style="left:0;top:550px;width:40px;height:22px;background:#f0f0f0"></div>
<div class="g" style="left:8px;width:30px;text-align:center;top:554px">26</div>
<div style="left:40px;top:571px;width:1853px;height:1px;background:#a0a0a0"></div>
<div style="left:3px;top:571px;width:36px;height:1px;background:#a0a0a0"></div>
<div class="g" style="left:43px;top:554px;transform:scaleX(0.915);transform-origin:left top;">EARSIVFATURA</div>
<div class="g" style="left:143px;top:554px;transform:scaleX(0.92);transform-origin:left top;">SATIS</div>
<div class="g" style="left:244px;top:554px;"><span class="lnk">TRY2024000000...</span></div>
<div class="g n" style="left:347px;top:554px;">15.04.2024</div>
<div class="g u" style="left:446px;top:554px;">ONUR HAYRİ US<span style="letter-spacing:0.9px">...</span></div>
<div class="g n" style="left:547px;top:554px;">120.01</div>
<div class="g" style="left:624px;top:554px;transform:scaleX(0.93);transform-origin:left top;">ONAYLANDI - S<span style="letter-spacing:0.9px">...</span></div>
<div class="g gr" style="left:721px;width:97px;top:554px;">703,96</div>
<div class="g gr" style="left:821px;width:97px;top:554px;">7,04</div>
<div class="g gr" style="left:921px;width:97px;top:554px;">711,00</div>
<div class="g gr" style="left:1121px;width:97px;top:554px;">0,00</div>
<div class="g n" style="left:1225px;top:554px;">600.20</div>
<div class="g gr" style="left:1321px;width:97px;top:554px;">0,00</div>
<div class="g n" style="left:1425px;top:554px;">391.20</div>
<div class="g gr" style="left:1621px;width:97px;top:554px;">0,00</div>
<div class="g n" style="left:1725px;top:554px;">600.18</div>
<div style="left:40px;top:572px;width:1853px;height:21px;background:#fff"></div>
<div style="left:0;top:572px;width:40px;height:22px;background:#f0f0f0"></div>
<div class="g" style="left:8px;width:30px;text-align:center;top:576px">27</div>
<div style="left:40px;top:593px;width:1853px;height:1px;background:#a0a0a0"></div>
<div style="left:3px;top:593px;width:36px;height:1px;background:#a0a0a0"></div>
<div class="g" style="left:43px;top:576px;transform:scaleX(0.915);transform-origin:left top;">EARSIVFATURA</div>
<div class="g" style="left:143px;top:576px;transform:scaleX(0.92);transform-origin:left top;">SATIS</div>
<div class="g" style="left:244px;top:576px;"><span class="lnk">TRY2024000000...</span></div>
<div class="g n" style="left:347px;top:576px;">15.04.2024</div>
<div class="g u" style="left:446px;top:576px;">HIZIRELİ SOSYA<span style="letter-spacing:0.9px">...</span></div>
<div class="g n" style="left:547px;top:576px;">120.01</div>
<div class="g" style="left:624px;top:576px;transform:scaleX(0.93);transform-origin:left top;">ONAYLANDI - S<span style="letter-spacing:0.9px">...</span></div>
<div class="g gr" style="left:721px;width:97px;top:576px;">79.208,30</div>
<div class="g gr" style="left:821px;width:97px;top:576px;">792,08</div>
<div class="g gr" style="left:921px;width:97px;top:576px;">80.000,38</div>
<div class="g gr" style="left:1121px;width:97px;top:576px;">0,00</div>
<div class="g n" style="left:1225px;top:576px;">600.20</div>
<div class="g gr" style="left:1321px;width:97px;top:576px;">0,00</div>
<div class="g n" style="left:1425px;top:576px;">391.20</div>
<div class="g gr" style="left:1621px;width:97px;top:576px;">0,00</div>
<div class="g n" style="left:1725px;top:576px;">600.18</div>
<div style="left:40px;top:594px;width:1853px;height:21px;background:#fff"></div>
<div style="left:0;top:594px;width:40px;height:22px;background:#f0f0f0"></div>
<div class="g" style="left:8px;width:30px;text-align:center;top:598px">28</div>
<div style="left:40px;top:615px;width:1853px;height:1px;background:#a0a0a0"></div>
<div style="left:3px;top:615px;width:36px;height:1px;background:#a0a0a0"></div>
<div class="g" style="left:43px;top:598px;transform:scaleX(0.945);transform-origin:left top;">TICARIFATURA</div>
<div class="g" style="left:143px;top:598px;transform:scaleX(0.92);transform-origin:left top;">SATIS</div>
<div class="g" style="left:244px;top:598px;"><span class="lnk">TRN2024000000...</span></div>
<div class="g n" style="left:347px;top:598px;">16.04.2024</div>
<div class="g u" style="left:446px;top:598px;">ALTINORDU MA<span style="letter-spacing:0.9px">...</span></div>
<div class="g n" style="left:547px;top:598px;">120.01</div>
<div class="g" style="left:624px;top:598px;transform:scaleX(0.93);transform-origin:left top;">ONAYLANDI - S<span style="letter-spacing:0.9px">...</span></div>
<div class="g gr" style="left:721px;width:97px;top:598px;">52.584,47</div>
<div class="g gr" style="left:821px;width:97px;top:598px;">652,21</div>
<div class="g gr" style="left:921px;width:97px;top:598px;">53.236,68</div>
<div class="g gr" style="left:1121px;width:97px;top:598px;">0,00</div>
<div class="g n" style="left:1225px;top:598px;">600.20</div>
<div class="g gr" style="left:1321px;width:97px;top:598px;">0,00</div>
<div class="g n" style="left:1425px;top:598px;">391.20</div>
<div class="g gr" style="left:1621px;width:97px;top:598px;">0,00</div>
<div class="g n" style="left:1725px;top:598px;">600.18</div>
<div style="left:40px;top:616px;width:1853px;height:21px;background:#ff4500"></div>
<div style="left:0;top:616px;width:40px;height:22px;background:#f0f0f0"></div>
<div class="g" style="left:8px;width:30px;text-align:center;top:620px">29</div>
<div style="left:40px;top:637px;width:1853px;height:1px;background:#a0a0a0"></div>
<div style="left:3px;top:637px;width:36px;height:1px;background:#a0a0a0"></div>
<div class="g" style="left:43px;top:620px;transform:scaleX(0.895);transform-origin:left top;">TEMELFATURA</div>
<div class="g" style="left:143px;top:620px;transform:scaleX(0.95);transform-origin:left top;">IADE</div>
<div class="g" style="left:244px;top:620px;"><span class="lnk">TRN2024000000...</span></div>
<div class="g n" style="left:347px;top:620px;">16.04.2024</div>
<div class="g u" style="left:446px;top:620px;">EKER SÜT ÜRÜN<span style="letter-spacing:0.9px">...</span></div>
<div class="g n" style="left:547px;top:620px;">120.01</div>
<div class="g" style="left:624px;top:620px;transform:scaleX(0.862);transform-origin:left top;">BEKLEMEDE - IA<span style="letter-spacing:0.9px">...</span></div>
<div class="g gr" style="left:721px;width:97px;top:620px;">1.701,42</div>
<div class="g gr" style="left:821px;width:97px;top:620px;">17,00</div>
<div class="g gr" style="left:921px;width:97px;top:620px;">1.718,42</div>
<div class="g gr" style="left:1121px;width:97px;top:620px;">0,00</div>
<div class="g n" style="left:1225px;top:620px;">153.20</div>
<div class="g gr" style="left:1321px;width:97px;top:620px;">0,00</div>
<div class="g n" style="left:1425px;top:620px;">391.20</div>
<div class="g gr" style="left:1621px;width:97px;top:620px;">0,00</div>
<div class="g n" style="left:1725px;top:620px;">153.18</div>
<div style="left:40px;top:638px;width:1853px;height:21px;background:#fff"></div>
<div style="left:0;top:638px;width:40px;height:22px;background:#f0f0f0"></div>
<div class="g" style="left:8px;width:30px;text-align:center;top:642px">30</div>
<div style="left:40px;top:659px;width:1853px;height:1px;background:#a0a0a0"></div>
<div style="left:3px;top:659px;width:36px;height:1px;background:#a0a0a0"></div>
<div class="g" style="left:43px;top:642px;transform:scaleX(0.895);transform-origin:left top;">TEMELFATURA</div>
<div class="g" style="left:143px;top:642px;transform:scaleX(0.92);transform-origin:left top;">SATIS</div>
<div class="g" style="left:244px;top:642px;"><span class="lnk">TRN2024000000...</span></div>
<div class="g n" style="left:347px;top:642px;">16.04.2024</div>
<div class="g u" style="left:446px;top:642px;">KALE GIDA SAN<span style="letter-spacing:0.9px">...</span></div>
<div class="g n" style="left:547px;top:642px;">120.01</div>
<div class="g" style="left:624px;top:642px;transform:scaleX(0.878);transform-origin:left top;">BEKLEMEDE - SA<span style="letter-spacing:0.9px">...</span></div>
<div class="g gr" style="left:721px;width:97px;top:642px;">12.425,13</div>
<div class="g gr" style="left:821px;width:97px;top:642px;">2.485,03</div>
<div class="g gr" style="left:921px;width:97px;top:642px;">14.910,16</div>
<div class="g gr" style="left:1121px;width:97px;top:642px;">12.425,13</div>
<div class="g n" style="left:1225px;top:642px;">600.20</div>
<div class="g gr" style="left:1321px;width:97px;top:642px;">2.485,03</div>
<div class="g n" style="left:1425px;top:642px;">391.20</div>
<div class="g gr" style="left:1621px;width:97px;top:642px;">0,00</div>
<div class="g n" style="left:1725px;top:642px;">600.18</div>
<div style="left:40px;top:660px;width:1853px;height:21px;background:#fff"></div>
<div style="left:0;top:660px;width:40px;height:22px;background:#f0f0f0"></div>
<div class="g" style="left:8px;width:30px;text-align:center;top:664px">31</div>
<div style="left:40px;top:681px;width:1853px;height:1px;background:#a0a0a0"></div>
<div style="left:3px;top:681px;width:36px;height:1px;background:#a0a0a0"></div>
<div class="g" style="left:43px;top:664px;transform:scaleX(0.895);transform-origin:left top;">TEMELFATURA</div>
<div class="g" style="left:143px;top:664px;transform:scaleX(0.92);transform-origin:left top;">SATIS</div>
<div class="g" style="left:244px;top:664px;"><span class="lnk">TRN2024000000...</span></div>
<div class="g n" style="left:347px;top:664px;">16.04.2024</div>
<div class="g u" style="left:446px;top:664px;">SERTELLİ İNŞAA<span style="letter-spacing:0.9px">...</span></div>
<div class="g n" style="left:547px;top:664px;">120.01</div>
<div class="g" style="left:624px;top:664px;transform:scaleX(0.878);transform-origin:left top;">BEKLEMEDE - SA<span style="letter-spacing:0.9px">...</span></div>
<div class="g gr" style="left:721px;width:97px;top:664px;">1.089,11</div>
<div class="g gr" style="left:821px;width:97px;top:664px;">10,89</div>
<div class="g gr" style="left:921px;width:97px;top:664px;">1.100,00</div>
<div class="g gr" style="left:1121px;width:97px;top:664px;">0,00</div>
<div class="g n" style="left:1225px;top:664px;">600.20</div>
<div class="g gr" style="left:1321px;width:97px;top:664px;">0,00</div>
<div class="g n" style="left:1425px;top:664px;">391.20</div>
<div class="g gr" style="left:1621px;width:97px;top:664px;">0,00</div>
<div class="g n" style="left:1725px;top:664px;">600.18</div>
<div style="left:40px;top:682px;width:1853px;height:21px;background:#fff"></div>
<div style="left:0;top:682px;width:40px;height:22px;background:#f0f0f0"></div>
<div class="g" style="left:8px;width:30px;text-align:center;top:686px">32</div>
<div style="left:40px;top:703px;width:1853px;height:1px;background:#a0a0a0"></div>
<div style="left:3px;top:703px;width:36px;height:1px;background:#a0a0a0"></div>
<div class="g" style="left:43px;top:686px;transform:scaleX(0.895);transform-origin:left top;">TEMELFATURA</div>
<div class="g" style="left:143px;top:686px;transform:scaleX(0.92);transform-origin:left top;">SATIS</div>
<div class="g" style="left:244px;top:686px;"><span class="lnk">TRN2024000000...</span></div>
<div class="g n" style="left:347px;top:686px;">16.04.2024</div>
<div class="g u" style="left:446px;top:686px;">EMİNE SOLGAN<span style="letter-spacing:0.9px">...</span></div>
<div class="g n" style="left:547px;top:686px;">120.01</div>
<div class="g" style="left:624px;top:686px;transform:scaleX(0.878);transform-origin:left top;">BEKLEMEDE - SA<span style="letter-spacing:0.9px">...</span></div>
<div class="g gr" style="left:721px;width:97px;top:686px;">2.772,57</div>
<div class="g gr" style="left:821px;width:97px;top:686px;">27,43</div>
<div class="g gr" style="left:921px;width:97px;top:686px;">2.800,00</div>
<div class="g gr" style="left:1121px;width:97px;top:686px;">0,00</div>
<div class="g n" style="left:1225px;top:686px;">600.20</div>
<div class="g gr" style="left:1321px;width:97px;top:686px;">0,00</div>
<div class="g n" style="left:1425px;top:686px;">391.20</div>
<div class="g gr" style="left:1621px;width:97px;top:686px;">0,00</div>
<div class="g n" style="left:1725px;top:686px;">600.18</div>
<div style="left:140px;top:0;width:1px;height:690px;background:#a0a0a0"></div>
<div style="left:240px;top:0;width:1px;height:690px;background:#a0a0a0"></div>
<div style="left:343px;top:0;width:1px;height:690px;background:#a0a0a0"></div>
<div style="left:443px;top:0;width:1px;height:690px;background:#a0a0a0"></div>
<div style="left:543px;top:0;width:1px;height:690px;background:#a0a0a0"></div>
<div style="left:621px;top:0;width:1px;height:690px;background:#a0a0a0"></div>
<div style="left:721px;top:0;width:1px;height:690px;background:#a0a0a0"></div>
<div style="left:821px;top:0;width:1px;height:690px;background:#a0a0a0"></div>
<div style="left:921px;top:0;width:1px;height:690px;background:#a0a0a0"></div>
<div style="left:1021px;top:0;width:1px;height:690px;background:#a0a0a0"></div>
<div style="left:1121px;top:0;width:1px;height:690px;background:#a0a0a0"></div>
<div style="left:1221px;top:0;width:1px;height:690px;background:#a0a0a0"></div>
<div style="left:1321px;top:0;width:1px;height:690px;background:#a0a0a0"></div>
<div style="left:1421px;top:0;width:1px;height:690px;background:#a0a0a0"></div>
<div style="left:1521px;top:0;width:1px;height:690px;background:#a0a0a0"></div>
<div style="left:1621px;top:0;width:1px;height:690px;background:#a0a0a0"></div>
<div style="left:1721px;top:0;width:1px;height:690px;background:#a0a0a0"></div>
<div style="left:1821px;top:0;width:1px;height:690px;background:#a0a0a0"></div>
<svg style="left:6px;top:7px" width="8" height="10"><path d="M0 0 L5 4 L0 8 Z" fill="#404040"/></svg>
</div>
<div style="left:45px;top:184px;width:1px;height:76px;background:#f0f0f0"></div>
<div style="left:45px;top:187px;width:1px;height:72px;background:#a0a0a0"></div>
<div style="left:548px;top:183px;width:78px;height:770px;border:3px solid #04aa2c"></div>
<div style="left:1898px;top:184px;width:17px;height:768px;background:#f0f0f0;border-left:1px solid #fff;border-right:1px solid #fff;border-top:1px solid #fff"></div>
<div style="left:1899px;top:201px;width:15px;height:306px;background:#cdcdcd"></div>
<svg style="left:1898px;top:184px" width="17" height="768"><path d="M5 11.5 L8.5 7.5 L12 11.5" fill="none" stroke="#606060" stroke-width="2"/><path d="M5 757 L8.5 761 L12 757" fill="none" stroke="#606060" stroke-width="2"/></svg>
<div style="left:5px;top:951px;width:1910px;height:17px;background:#f0f0f0;border-top:1px solid #fff;border-bottom:1px solid #fff"></div>
<div style="left:1898px;top:952px;width:17px;height:15px;background:#f0f0f0"></div>
<div style="left:22px;top:952px;width:734px;height:15px;background:#cdcdcd"></div>
<svg style="left:5px;top:951px" width="1893" height="17"><path d="M10.5 5 L6.8 8.5 L10.5 12" fill="none" stroke="#606060" stroke-width="2"/><path d="M1882.5 5 L1886.2 8.5 L1882.5 12" fill="none" stroke="#606060" stroke-width="2"/></svg>
<div style="left:1px;top:991px;width:1499px;height:1px;background:#dcdcdc"></div>
<div style="left:2px;top:994px;width:89px;height:18px;border-left:1px solid #a0a0a0;border-top:1px solid #a0a0a0;border-bottom:1px solid #fff;border-right:1px solid #fff"></div>
<div class="t" style="left:8px;top:997px;font-size:12px;transform:scaleX(0.911);transform-origin:left top;">Fatura Sayısı:74</div>
<div style="left:93px;top:994px;width:72px;height:18px;background:#008000;border:1px solid #3c9c3c;border-bottom-color:#9fd89f;border-right-color:#9fd89f"></div>
<div class="t" style="left:101px;top:997px;font-size:12px;transform:scaleX(0.936);transform-origin:left top;color:#fff">Bakiye:0,00</div>
<div style="left:167px;top:994px;width:171px;height:18px;border-left:1px solid #a0a0a0;border-top:1px solid #a0a0a0;border-bottom:1px solid #fff;border-right:1px solid #fff"></div>
<div class="t" style="left:173px;top:997px;font-size:12px;transform:scaleX(0.956);transform-origin:left top;">Kdv Hariç Toplam:1.276.191,50</div>
<div style="left:338px;top:994px;width:127px;height:18px;border-left:1px solid #a0a0a0;border-top:1px solid #a0a0a0;border-bottom:1px solid #fff;border-right:1px solid #fff"></div>
<div class="t" style="left:347px;top:997px;font-size:12px;transform:scaleX(0.953);transform-origin:left top;">Toplam Kdv:57.915,47</div>
<div style="left:465px;top:994px;width:108px;height:18px;border-left:1px solid #a0a0a0;border-top:1px solid #a0a0a0;border-bottom:1px solid #fff;border-right:1px solid #fff"></div>
<div class="t" style="left:473px;top:997px;font-size:12px;transform:scaleX(0.955);transform-origin:left top;">Diğer Vergiler:0,00</div>
<div style="left:573px;top:994px;width:153px;height:18px;border-left:1px solid #a0a0a0;border-top:1px solid #a0a0a0;border-bottom:1px solid #fff;border-right:1px solid #fff"></div>
<div class="t" style="left:581px;top:997px;font-size:12px;transform:scaleX(0.947);transform-origin:left top;">Genel Toplam:1.334.106,97</div>
<div style="left:726px;top:994px;width:1px;height:18px;background:#a0a0a0"></div>
<div style="left:729px;top:994px;width:1px;height:18px;background:#a0a0a0"></div>
<div style="left:1664px;top:985px;width:128px;height:21px;background:#008000;border:3px solid #e3e3e3"></div>
<div style="left:1664px;top:985px;width:128px;height:21px;border:1px solid #a8a8a8"></div>
<div class="t" style="left:1671px;top:989px;font-size:12.4px;font-weight:bold;transform:scaleX(1.010);transform-origin:left top;color:#fff">DIŞARI AKTAR - F2</div>
<div style="left:1800px;top:985px;width:115px;height:21px;background:#cd5c5c;border:3px solid #e3e3e3"></div>
<div style="left:1800px;top:985px;width:115px;height:21px;border:1px solid #a8a8a8"></div>
<div class="t" style="left:1814px;top:989px;font-size:12px;font-weight:bold;transform:scaleX(1.014);transform-origin:left top;color:#fff">VAZGEÇ - ESC</div>
<div style="left:0px;top:1015px;width:1920px;height:1px;background:#a0a0a0"></div>
<div style="left:1px;top:1019px;width:47px;height:18px;border-left:1px solid #a0a0a0;border-top:1px solid #a0a0a0;border-bottom:1px solid #fff;border-right:1px solid #fff"></div>
<div class="t" style="left:7px;top:1022px;font-size:12px;transform:scaleX(0.876);transform-origin:left top;">DEBUG</div>
<div style="left:49px;top:1019px;width:95px;height:18px;border-left:1px solid #a0a0a0;border-top:1px solid #a0a0a0;border-bottom:1px solid #fff;border-right:1px solid #fff"></div>
<div class="t" style="left:54px;top:1022px;font-size:12px;transform:scaleX(0.938);transform-origin:left top;">Versiyon : 5.1.0.0</div>
</body></html>
